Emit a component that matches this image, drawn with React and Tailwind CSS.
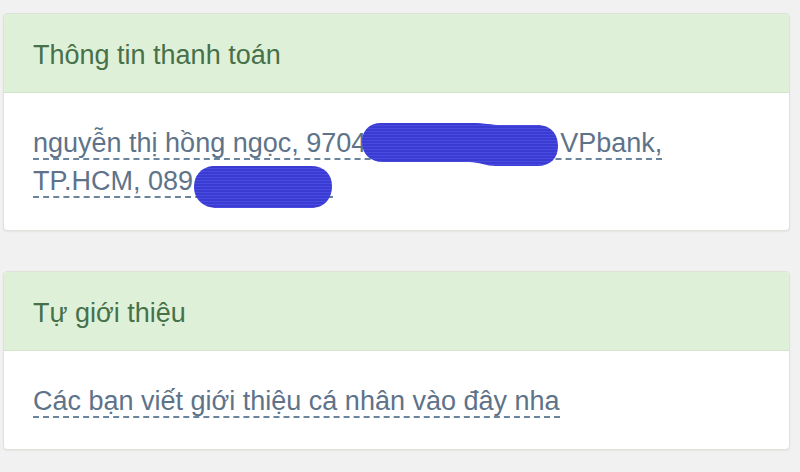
import React from "react";

function Blob({ className, d, w, h }) {
  return (
    <svg
      className={className}
      width={w}
      height={h}
      viewBox={`0 0 ${w} ${h}`}
      aria-hidden="true"
    >
      <defs>
        <pattern id="scr" width="4" height="3" patternUnits="userSpaceOnUse">
          <rect width="4" height="3" fill="#3a3bd2" />
          <rect width="4" height="1" fill="#4a4ce0" />
        </pattern>
      </defs>
      <path d={d} fill="url(#scr)" />
    </svg>
  );
}

function Card({ title, children, bodyClass }) {
  return (
    <div className="rounded-[4px] border border-[#dde3d9] bg-white shadow-[0_1px_2px_rgba(0,0,0,0.06)] overflow-hidden">
      <div className="h-[79px] bg-[#dff0d8] border-b border-[#d3e4cb] flex items-center pl-[29px] pt-[4px] text-[27px] text-[#46714a]">
        {title}
      </div>
      <div className={bodyClass}>{children}</div>
    </div>
  );
}

export default function App() {
  return (
    <div
      className="w-[800px] h-[472px] bg-[#f1f1f2] pt-[13px] pl-[3px] pr-[10px] flex flex-col gap-[40px] overflow-hidden"
      style={{ fontFamily: '"Liberation Sans", Arial, sans-serif' }}
    >
      <Card
        title="Thông tin thanh toán"
        bodyClass="px-[29px] pt-[31px] pb-[30px] text-[27px] leading-[38px] text-[#5e7389]"
      >
        <span className="border-b-2 border-dashed border-[#6a849b]">
          nguyễn thị hồng ngọc, 9704
          <span className="relative inline-block w-[194px] h-0">
            <Blob
              className="absolute left-[-5px] top-[-30px]"
              w={198}
              h={45}
              d="M20 1 L110 1 C125 1 130 3 140 3 L176 3 C190 3 197 12 197 24 C197 36 190 44 176 44 L135 44 C125 44 118 40 108 40 L22 40 C9 40 1 32 1 20 C1 8 9 1 20 1 Z"
            />
          </span>
          VPbank,
          <br />
          TP.HCM, 089
          <span className="relative inline-block w-[140px] h-0">
            <Blob
              className="absolute left-[0px] top-[-25px]"
              w={140}
              h={44}
              d="M22 1 L118 1 C131 1 139 9 139 21 C139 34 131 43 118 43 L24 43 C10 43 1 34 1 22 C1 9 10 1 22 1 Z"
            />
          </span>
        </span>
      </Card>
      <Card
        title="Tự giới thiệu"
        bodyClass="px-[29px] pt-[31px] pb-[29px] text-[27px] leading-[38px] text-[#5e7389]"
      >
        <span className="border-b-2 border-dashed border-[#6a849b]">
          Các bạn viết giới thiệu cá nhân vào đây nha
        </span>
      </Card>
    </div>
  );
}
